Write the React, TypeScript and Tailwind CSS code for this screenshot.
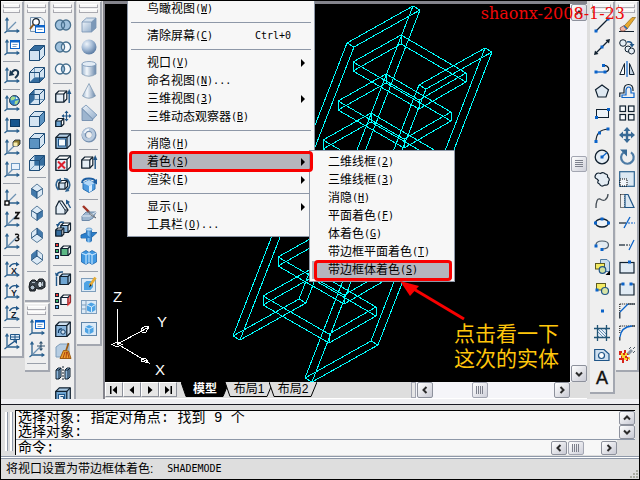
import React from "react";

type Item = { name: string; art: React.ReactNode } | "sep";

const INK = "#10202f";
const NAVY = "#1f5587";
const BLUE = "#0a63c9";

function Axes({ children }: { children?: React.ReactNode }) {
  return (
    <>
      <path d="M3 1.5V14H15M.5 16L3 14" fill="none" stroke="#2d628f" strokeWidth="1.3" />
      <path d="M3 0L5.2 3.6H.8ZM16 14L12.6 11.8V16.2Z" fill="#2d628f" />
      {children}
    </>
  );
}

const diagonal = <path d="M3.5 13.5L12 5" stroke="#6f93b3" strokeWidth="1.2" />;

function SmallWindow() {
  return (
    <>
      <rect x="6.5" y="1.5" width="9" height="8" fill="#fff" stroke={BLUE} />
      <path d="M6.5 2.5h9" stroke={BLUE} strokeWidth="2" />
      <path d="M8.5 5.5h5M8.5 7.5h4" stroke="#7ba0c5" />
    </>
  );
}

function Turn({ letter }: { letter: string }) {
  return (
    <Axes>
      <path d="M5.5 6Q8 1.5 13 3" fill="none" stroke={NAVY} strokeWidth="1.4" />
      <path d="M15.5 3.5L12 5.6V.8Z" fill={NAVY} />
      <text x="7" y="12.5" fontSize="9" fontWeight="700" fontFamily="Liberation Sans, sans-serif" fill={INK}>
        {letter}
      </text>
    </Axes>
  );
}

function ViewCube({ face }: { face: "top" | "bottom" | "left" | "right" | "front" | "back" }) {
  const faces = {
    top: "M.5 5.5L5.5.5H15.5L10.5 5.5Z",
    bottom: "M.5 15.5L5.5 10.5H15.5L10.5 15.5Z",
    left: "M.5 5.5L5.5.5V10.5L.5 15.5Z",
    right: "M10.5 5.5L15.5.5V10.5L10.5 15.5Z",
    front: "M.5 5.5H10.5V15.5H.5Z",
    back: "M5.5.5H15.5V10.5H5.5Z",
  };
  const hollow = face === "bottom" || face === "left" || face === "back";
  return (
    <>
      <path d="M.5 5.5L5.5.5H15.5V10.5L10.5 15.5H.5Z" fill="#d4e4f2" />
      <path d={faces[face]} fill={face === "right" || face === "front" ? "#5c93c2" : "#356d9f"} />
      {hollow && <path d="M5.5.5V10.5H15.5M5.5 10.5L.5 15.5" fill="none" stroke="#6d97bb" />}
      <path
        d="M.5 5.5L5.5.5H15.5V10.5L10.5 15.5H.5ZM.5 5.5H10.5V15.5M10.5 5.5L15.5.5"
        fill="none"
        stroke="#1f4d78"
      />
    </>
  );
}

function IsoCube({ shade }: { shade: "left" | "right" | "backRight" | "backLeft" }) {
  const faces = {
    left: "M2.5 5.5L8 9V15.5L2.5 11.5Z",
    right: "M8 9L13.5 5.5V11.5L8 15.5Z",
    backRight: "M8 1L13.5 5.5V10.5L8 7Z",
    backLeft: "M8 1L2.5 5.5V10.5L8 7Z",
  };
  return (
    <>
      <path d="M8 1L13.5 5.5V11.5L8 15.5L2.5 11.5V5.5Z" fill="#dceaf6" stroke="#5a7c9b" />
      <path d={faces[shade]} fill="#4279ab" />
      {shade === "left" || shade === "right" ? (
        <path d="M2.5 5.5L8 9L13.5 5.5M8 9V15.5" fill="none" stroke="#1f4d78" />
      ) : (
        <path d="M2.5 11L8 7L13.5 11M8 7V1" fill="none" stroke="#1f4d78" />
      )}
    </>
  );
}

function Rings({ a, b, mid }: { a: string; b: string; mid: string }) {
  return (
    <>
      <circle cx="5" cy="8" r="4.5" fill={a} />
      <circle cx="11" cy="8" r="4.5" fill={b} />
      <path d="M8 4.6A4.5 4.5 0 0 1 8 11.4A4.5 4.5 0 0 1 8 4.6Z" fill={mid} />
      <ellipse cx="5" cy="8" rx="4.6" ry="5" fill="none" stroke="#47708f" strokeWidth="1.3" />
      <ellipse cx="11" cy="8" rx="4.6" ry="5" fill="none" stroke="#47708f" strokeWidth="1.3" />
    </>
  );
}

function Block({
  x = 1,
  y = 2,
  s = 9,
  d = 3,
  fill = "#e4edf5",
  side = "#fff",
}: {
  x?: number;
  y?: number;
  s?: number;
  d?: number;
  fill?: string;
  side?: string;
}) {
  return (
    <g stroke={INK} strokeWidth="1.2" strokeLinejoin="round">
      <path d={`M${x} ${y + d}l${d} ${-d}h${s}v${s}l${-d} ${d}h${-s}z`} fill={side} />
      <path d={`M${x} ${y + d}h${s}v${s}h${-s}z`} fill={fill} />
      <path d={`M${x + s} ${y + d}l${d} ${-d}`} fill="none" />
    </g>
  );
}

function ColorDots() {
  return (
    <>
      <rect x=".5" y=".5" width="3" height="3" fill="#e33" stroke={INK} />
      <rect x=".5" y="6.5" width="3" height="3" fill="#3cb86a" stroke={INK} />
      <rect x=".5" y="12.5" width="3" height="3" fill="#5aa9e8" stroke={INK} />
    </>
  );
}

function Nodes({ at }: { at: [number, number][] }) {
  return (
    <>
      {at.map(([x, y]) => (
        <rect key={`${x}-${y}`} x={x - 1.5} y={y - 1.5} width="3" height="3" fill={BLUE} />
      ))}
    </>
  );
}

const extrude = (
  <>
    <Block x={0.8} y={2} s={8} d={3} />
    <path d="M14.2 14V4" stroke={NAVY} strokeWidth="1.4" />
    <path d="M14.2 0L16.4 5H12Z" fill={NAVY} />
  </>
);

const ucsBar: Item[] = [
  { name: "UCS", art: <Axes>{diagonal}</Axes> },
  { name: "显示 UCS 对话框", art: <Axes><SmallWindow /></Axes> },
  "sep",
  {
    name: "上一个 UCS",
    art: (
      <Axes>
        <path d="M7 6.5Q11 .5 14 4.5Q15 8 11 11" fill="none" stroke="#183650" strokeWidth="2" />
        <path d="M5 9L6 3L10.5 8Z" fill="#183650" />
      </Axes>
    ),
  },
  "sep",
  {
    name: "世界 UCS",
    art: (
      <Axes>
        <circle cx="10.5" cy="5.5" r="5" fill="#3286ce" stroke={INK} strokeWidth=".8" />
        <path d="M8 1.5Q11 1 12 3L9.5 5L7 5.5L6.5 3ZM11 6L15 5L13 9L10.5 9.5Z" fill="#a8dc8a" />
        <path d="M12 1.5L14 4L12 4Z" fill="#eff7ff" />
      </Axes>
    ),
  },
  { name: "对象 UCS", art: <Axes><rect x="6.5" y="2.5" width="9" height="7" fill="#17568f" stroke="#0d3861" /></Axes> },
  {
    name: "面 UCS",
    art: <Axes>{diagonal}<path d="M9 3L11 1H16V5L14 7H9Z" fill="#8d7b30" stroke={INK} strokeWidth=".8" /><rect x="9.5" y="3.5" width="4" height="3.5" fill="#f7edb0" /></Axes>,
  },
  {
    name: "视图 UCS",
    art: <Axes>{diagonal}<rect x="7.5" y="2.5" width="8" height="6" fill="#e8f2fc" stroke="#6c97c0" /></Axes>,
  },
  "sep",
  {
    name: "原点 UCS",
    art: <Axes>{diagonal}<rect x="1" y="12" width="4" height="4" fill="#fff" stroke="#000" strokeWidth="1.3" /></Axes>,
  },
  {
    name: "Z 轴矢量 UCS",
    art: <Axes>{diagonal}<path d="M11 1.7H15L11 7.3H15.4" fill="none" stroke="#111" strokeWidth="1.7" /></Axes>,
  },
  {
    name: "三点 UCS",
    art: <Axes>{diagonal}<path d="M11 1.5Q15 .5 14.5 3Q14 4.2 12.5 4.2Q15 4.5 14.8 6.2Q14 8.5 11 7.3" fill="none" stroke="#111" strokeWidth="1.5" /></Axes>,
  },
  "sep",
  { name: "绕 X 轴旋转", art: <Turn letter="X" /> },
  { name: "绕 Y 轴旋转", art: <Turn letter="Y" /> },
  { name: "绕 Z 轴旋转", art: <Turn letter="Z" /> },
  "sep",
  {
    name: "应用 UCS",
    art: (
      <Axes>
        <path d="M6.500 1.500h9v5h-9zM11 1.500v5M6.500 4h9" fill="#dbe9f6" stroke={NAVY} />
        <path d="M4 13L11 8" stroke={NAVY} strokeWidth="1.5" />
        <path d="M13 7V11L9 7.500Z" fill={NAVY} />
      </Axes>
    ),
  },
];

const viewBar: Item[] = [
  {
    name: "命名视图",
    art: (
      <>
        <path d="M1.5 .5H12L15.500 4V14.500H1.500Z" fill="#eef4fa" stroke="#7894ae" />
        <circle cx="7" cy="5" r="3.300" fill="#fff" stroke={INK} strokeWidth="1.200" />
        <path d="M4.500 7.500L1 12" stroke="#8b5b21" strokeWidth="2" />
        <rect x="6.500" y="8.500" width="9" height="7" fill="#fff" stroke={BLUE} />
        <path d="M6.500 9.500h9" stroke={BLUE} strokeWidth="2" />
        <path d="M8.500 12.500h5" stroke="#7ba0c5" />
      </>
    ),
  },
  "sep",
  { name: "俯视图", art: <ViewCube face="top" /> },
  { name: "仰视图", art: <ViewCube face="bottom" /> },
  { name: "左视图", art: <ViewCube face="left" /> },
  { name: "右视图", art: <ViewCube face="right" /> },
  { name: "主视图", art: <ViewCube face="front" /> },
  { name: "后视图", art: <ViewCube face="back" /> },
  "sep",
  { name: "西南等轴测", art: <IsoCube shade="left" /> },
  { name: "东南等轴测", art: <IsoCube shade="right" /> },
  { name: "东北等轴测", art: <IsoCube shade="backRight" /> },
  { name: "西北等轴测", art: <IsoCube shade="backLeft" /> },
  "sep",
  {
    name: "相机",
    art: (
      <>
        <path d="M1 5L3 3H6L8 5L10 2H14L16 5V10L13 12H9L7 11L6 14H1L0 10Z" fill="#3c454e" stroke="#15191d" />
        <circle cx="3.500" cy="10.500" r="2.500" fill="#aebcc9" stroke="#15191d" />
        <ellipse cx="11" cy="7.500" rx="2.300" ry="3.300" fill="#dce6ef" stroke="#15191d" />
        <path d="M3 5.500H6M13.500 5V9" stroke="#b6c2cc" />
      </>
    ),
  },
];

const ucsBar2: Item[] = [
  { name: "命名 UCS", art: <Axes><SmallWindow /></Axes> },
  {
    name: "移动 UCS",
    art: <Axes>{diagonal}<path d="M12 1V9M8 5H16M10.500 2.500L12 .8L13.500 2.500M10.500 7.500L12 9.200L13.500 7.500" fill="none" stroke="#31536f" strokeWidth="1.100" /></Axes>,
  },
  "sep",
];

const solidEditBar: Item[] = [
  { name: "并集", art: <Rings a="#9fc1dd" b="#9fc1dd" mid="#9fc1dd" /> },
  { name: "差集", art: <Rings a="#9fc1dd" b="#f7fafd" mid="#eef4fa" /> },
  { name: "交集", art: <Rings a="#f7fafd" b="#f7fafd" mid="#9fc1dd" /> },
  "sep",
  { name: "拉伸面", art: extrude },
  {
    name: "移动面",
    art: (
      <>
        <Block x={0.8} y={7.500} s={5.500} d={2.500} fill="#6ea5d2" />
        <path d="M11.500 1V9M7.500 5H15.500" stroke={NAVY} strokeWidth="1.200" />
        <path d="M11.500 -.5L13.500 2H9.500ZM11.500 10.500L13.500 8H9.500ZM6.500 5L9 3V7ZM16.500 5L14 3V7Z" fill={NAVY} />
      </>
    ),
  },
  {
    name: "偏移面",
    art: (
      <>
        <Block x={1} y={0.800} s={11} d={3.500} fill="#8bb6dc" side="#b6d0e7" />
        <rect x="3.500" y="6" width="7" height="7" fill="#f5f9fc" stroke={NAVY} />
      </>
    ),
  },
  { name: "删除面", art: <><Block x={1} y={0.800} s={11} d={3.500} /><path d="M3 6.500L10 13.500M10 6.500L3 13.500" stroke="#dd1f2d" strokeWidth="2" /></> },
  {
    name: "旋转面",
    art: (
      <>
        <Block x={4} y={3.500} s={6} d={2.500} fill="#cfe0ef" />
        <path d="M3.500 13Q-1 8 3 3M12.500 13Q17 8 12.500 2.500L9 1.500" fill="none" stroke="#2d628f" strokeWidth="1.600" />
        <path d="M1.500 3L6 1V5.500ZM10 15L14.500 14L12 10.500Z" fill="#2d628f" />
      </>
    ),
  },
  {
    name: "倾斜面",
    art: (
      <>
        <path d="M1 15V8L4 2L7 2L13 11L10 15Z" fill="#e4edf5" stroke={INK} strokeWidth="1.200" />
        <path d="M4 2L10 11V15M10 11L13 11" fill="none" stroke={INK} />
        <path d="M15.500 9L12.500 3.500" stroke={NAVY} strokeWidth="1.400" />
        <path d="M11 .5L15 3L11 5.500Z" fill={NAVY} />
      </>
    ),
  },
  {
    name: "复制面",
    art: (
      <>
        <Block x={6} y={2} s={7} d={2.500} fill="#8bb6dc" />
        <Block x={0.800} y={7} s={6} d={2} fill="#356d9f" />
        <path d="M3 4Q5 0 9 1.500" fill="none" stroke={NAVY} strokeWidth="1.500" />
        <path d="M1 3L5 3L2.500 6.500Z" fill={NAVY} />
      </>
    ),
  },
  { name: "着色面", art: <><ColorDots /><Block x={6} y={3} s={7} d={2.500} fill="#5bb784" /></> },
  "sep",
  {
    name: "复制边",
    art: (
      <>
        <Block x={5} y={3} s={8} d={2.500} fill="#6ea5d2" side="#a9c9e4" />
        <path d="M1.500 15V6M1.500 4Q3 .5 8 1" fill="none" stroke={NAVY} strokeWidth="1.400" />
        <path d="M0 1.500L4 4L1 6Z" fill={NAVY} />
      </>
    ),
  },
  { name: "着色边", art: <><ColorDots /><Block x={6} y={2} s={7} d={2.500} fill="#f3f6fa" /><path d="M13 5V12L15 10V2.500" fill="none" stroke="#e33" strokeWidth="1.200" /></> },
  "sep",
  {
    name: "压印",
    art: (
      <>
        <Block x={0.800} y={1} s={11} d={3.500} fill="#8bb6dc" side="#cfe0ef" />
        <path d="M3.500 12Q3 7.500 7 8" fill="none" stroke="#0d3861" strokeWidth="1.200" />
        <circle cx="8" cy="11" r="2.200" fill="#cfe0ef" stroke="#0d3861" />
      </>
    ),
  },
  {
    name: "清除",
    art: (
      <>
        <path d="M1 4L5 1H14V11L10 14H1Z" fill="#b6cde2" stroke="#7f9db9" />
        <path d="M13.500 0L11 8" stroke="#9a5a12" strokeWidth="1.800" />
        <path d="M8.500 7.500L13.500 8L16 15.500H5Z" fill="#eda32d" stroke="#9a5a12" />
        <path d="M8 15L10 9M11 15L11.500 9M14 15L12.500 9" stroke="#a5340f" strokeWidth=".9" />
      </>
    ),
  },
  {
    name: "分割",
    art: (
      <>
        <path d="M1 5L3 3H6V12L4 14H1ZM10 5L12 3H15V12L13 14H10Z" fill="#8bb6dc" stroke={INK} />
        <path d="M4 14V5H1M4 5L6 3M13 14V5H10M13 5L15 3" fill="none" stroke={INK} />
        <path d="M8 1V16" stroke={INK} strokeDasharray="2 1" />
      </>
    ),
  },
  { name: "抽壳", art: <><Block x={0.800} y={0.800} s={11} d={3.500} fill="#6ea5d2" side="#a9c9e4" /><rect x="3.500" y="7.500" width="6" height="6" fill="#e4edf5" stroke={NAVY} /><path d="M5.500 9.500h3v4" fill="none" stroke={NAVY} /></> },
];

const solidsBar: Item[] = [
  {
    name: "长方体",
    art: (
      <>
        <path d="M1 5L5.500 1H15V11L10.500 15H1Z" fill="#d3e0ed" />
        <path d="M1 5H10.500V15H1Z" fill="url(#steel)" />
        <path d="M10.500 5L15 1V11L10.500 15Z" fill="#7c98b8" />
        <path d="M1 5L5.500 1H15V11L10.500 15H1ZM1 5H10.500V15M10.500 5L15 1" fill="none" stroke="#7793b2" strokeWidth=".8" />
      </>
    ),
  },
  { name: "球体", art: <circle cx="8" cy="8" r="7.500" fill="url(#ball)" /> },
  {
    name: "圆柱体",
    art: (
      <>
        <path d="M1 3V13Q8 17.500 15 13V3Z" fill="url(#tube)" stroke="#8099b3" strokeWidth=".8" />
        <ellipse cx="8" cy="3" rx="7" ry="2.500" fill="#e3ecf5" stroke="#7c98b8" strokeWidth=".8" />
      </>
    ),
  },
  { name: "圆锥体", art: <path d="M8 .5L14.500 13Q8 17.500 1.500 13Z" fill="url(#tube)" stroke="#8099b3" strokeWidth=".8" /> },
  {
    name: "楔体",
    art: (
      <>
        <path d="M1 3L5 0L16 10L11.500 15.500H1Z" fill="#8ca7c5" />
        <path d="M5 0L16 10L11.500 14L1 3.500Z" fill="url(#steel)" stroke="#7c98b8" strokeWidth=".8" />
        <path d="M1 3.500L11.500 14V15.500H1Z" fill="#9db5cf" stroke="#6d89a8" strokeWidth=".8" />
      </>
    ),
  },
  {
    name: "圆环",
    art: (
      <>
        <circle cx="8" cy="8" r="5.200" fill="none" stroke="#7590b0" strokeWidth="4.600" />
        <circle cx="7.500" cy="7.500" r="5.200" fill="none" stroke="#b8cade" strokeWidth="3" />
        <path d="M3.500 6Q5 2.800 8 2.600" fill="none" stroke="#f1f6fb" strokeWidth="1.600" />
      </>
    ),
  },
  "sep",
  { name: "拉伸", art: extrude },
  {
    name: "旋转",
    art: (
      <>
        <path d="M2 6L8 3L14 6V12L8 15.500L2 12Z" fill="#4d9be0" stroke="#2b73b5" />
        <path d="M2 6L8 9L14 6L8 3Z" fill="#b5d9f8" />
        <path d="M8 9L11 7.500V13.500L8 15.500Z" fill="#d9ecfc" />
        <path d="M1 6Q1 1.500 8 1.500Q13 1.500 14.500 4" fill="none" stroke="#1c5ea2" strokeWidth="1.800" />
        <path d="M16 2V7.500L11.500 5Z" fill="#1c5ea2" />
      </>
    ),
  },
  "sep",
  {
    name: "剖切",
    art: (
      <>
        <path d="M1 11L5 7H15L12 13L8 15.500H1Z" fill="#9db6cf" stroke="#6d89a8" />
        <path d="M1 11H9L15 7" fill="none" stroke="#e3ecf5" />
        <path d="M2 1L8 7" stroke="#a13324" strokeWidth="2.400" />
        <path d="M7 6L15 13L9.500 10Z" fill="#f4f6f8" stroke="#59636d" strokeWidth=".8" />
      </>
    ),
  },
  {
    name: "切割",
    art: (
      <>
        <path d="M0 8L6 5.500H16L10 11H0Z" fill="#2c7fcb" stroke="#165a9b" strokeWidth=".8" />
        <path d="M5 2V14Q8 17 11 14V2Z" fill="url(#water)" />
        <path d="M0 9L5 7L10 11H1ZM11 7L15 6.500L11 9Z" fill="#2c7fcb" />
        <ellipse cx="8" cy="2.500" rx="3" ry="1.500" fill="#b9dbf7" stroke="#3a81bd" strokeWidth=".6" />
      </>
    ),
  },
  {
    name: "干涉",
    art: (
      <>
        <path d="M.5 4L5 1.500L8 3.500L11 1.500L15.500 4V13L11 15.500L8 13.500L5 15.500L.5 13Z" fill="#3f98e2" stroke="#1d66ad" strokeWidth=".8" />
        <path d="M.5 4L5 6V15.500M5 6L8 4L11 6L15.500 4M11 6V15.500M8 4V13.500" fill="none" stroke="#bcdffb" strokeWidth="1.200" />
      </>
    ),
  },
  "sep",
  {
    name: "设置图形",
    art: (
      <>
        <rect x=".5" y="1.500" width="14" height="13" fill="#dceaf6" stroke="#7d9dbb" />
        <path d="M3 6L5.500 4H12V10L9.500 13H3Z" fill="#4da3e4" />
        <path d="M14.500 .5L9 8.500" stroke="#e6ac37" strokeWidth="2.800" />
        <path d="M9.500 7L8 10.500L10.500 8.500Z" fill="#1d1d1d" />
      </>
    ),
  },
  {
    name: "设置视图",
    art: (
      <>
        <rect x=".5" y="1.500" width="15" height="13" fill="#dceaf6" stroke="#7d9dbb" />
        <path d="M1 6H5M1 10H5M5 2V14" stroke="#7d9dbb" />
        <path d="M6 6L10 3.500L14.500 5.500V11L10.500 13.500L6 11.500Z" fill="#4da3e4" />
        <path d="M6 6L10.500 8L14.500 5.500M10.500 8V13.500" fill="none" stroke="#d3eafc" />
      </>
    ),
  },
  {
    name: "设置轮廓",
    art: (
      <>
        <rect x=".5" y="1.500" width="15" height="13" fill="#dceaf6" stroke="#6085a8" />
        <path d="M4 6L8 4L12.500 6V11L8 13.500L4 11Z" fill="#4da3e4" />
        <path d="M4 6L8 8L12.500 6M8 8V13.500" fill="none" stroke="#d3eafc" />
      </>
    ),
  },
];

const drawBar: Item[] = [
  { name: "直线", art: <><path d="M2 14L14 2" stroke={INK} strokeWidth="1.300" /><Nodes at={[[2, 14], [14, 2]]} /></> },
  { name: "构造线", art: <><path d="M2 14L14 2" stroke={INK} strokeWidth="1.300" /><path d="M0 16L1 11.500L4.500 15ZM16 0L15 4.500L11.500 1Z" fill={INK} /><Nodes at={[[8, 8]]} /></> },
  { name: "多段线", art: <><path d="M2 11H11" stroke={BLUE} strokeWidth="1.300" /><path d="M11 11Q15.500 10 14.500 7Q13 4 9 4.500" fill="none" stroke={INK} strokeWidth="1.200" /><Nodes at={[[2, 11], [11, 11], [9.500, 4.500]]} /></> },
  { name: "正多边形", art: <path d="M8 2L14.500 6.700L12 14H4L1.500 6.700Z" fill="#dfe9f2" stroke={INK} strokeWidth="1.200" /> },
  { name: "矩形", art: <><rect x="2.500" y="4.500" width="12" height="8" fill="#eef3f8" stroke={INK} /><Nodes at={[[2.500, 12.500], [14.500, 4.500]]} /></> },
  { name: "圆弧", art: <><path d="M2 14.500Q2 3 14 2" fill="none" stroke={INK} strokeWidth="1.200" /><Nodes at={[[2, 14.500], [5.500, 6], [14, 2]]} /></> },
  { name: "圆", art: <><circle cx="8" cy="8" r="6.800" fill="#e5edf4" stroke={INK} strokeWidth="1.300" /><path d="M8 8L13 3.500" stroke={BLUE} strokeWidth="1.200" /><Nodes at={[[8, 8]]} /></> },
  { name: "修订云线", art: <path d="M3 8Q0 7 1.500 4Q3 1 6.500 2.500Q9 .5 11.500 3Q14 3 13.500 6Q16.500 8 14.500 10.500Q15 14.500 11 14Q7 16.500 5.500 13Q2.500 12 4.500 9.500Z" fill="#e5edf4" stroke={INK} strokeWidth="1.200" /> },
  { name: "样条曲线", art: <path d="M2 15Q2 5 6 6Q9 8 11 7Q14 5 14 1" fill="none" stroke="#444d55" strokeWidth="1.300" /> },
  { name: "椭圆", art: <><ellipse cx="8" cy="8" rx="6.500" ry="4" fill="#eef3f8" stroke={INK} strokeWidth="1.300" /><Nodes at={[[1.500, 8], [14.500, 8], [8, 4]]} /></> },
  { name: "椭圆弧", art: <><path d="M2 8Q2 4 8 4Q14.500 4 14.500 8Q14.500 12 8 12L8 8Z" fill="#e1eaf2" /><path d="M2 8Q2 4 8 4Q14.500 4 14.500 8Q14.500 12 8 12" fill="none" stroke="#4b5b69" strokeWidth="1.200" /><Nodes at={[[2, 9], [8, 12.500]]} /></> },
  {
    name: "插入块",
    art: (
      <>
        <path d="M6.500 .5H13L15.500 3V12.500H6.500Z" fill="#c7dcee" stroke="#4e7ba4" />
        <rect x="1.500" y="4.500" width="9" height="5.500" fill="#f4ea62" stroke="#5d5a1f" />
        <circle cx="8.500" cy="11" r="3.300" fill="#cfe0a2" stroke={NAVY} strokeWidth="1.200" />
        <path d="M16 11.500V16H11.500Z" fill="#000" />
      </>
    ),
  },
  {
    name: "创建块",
    art: (
      <>
        <rect x="2.500" y="2.500" width="9" height="6.500" fill="#f4ea62" stroke="#5d5a1f" />
        <circle cx="11" cy="10" r="3.500" fill="#d8e4a5" stroke={NAVY} strokeWidth="1.200" />
        <Nodes at={[[3, 9]]} />
      </>
    ),
  },
  { name: "点", art: <Nodes at={[[8.500, 8]]} /> },
  {
    name: "图案填充",
    art: (
      <>
        <rect x="3" y="3" width="10" height="10" fill="#e5eff8" />
        <path d="M3 6L10 13M3 10L6 13M6 3L13 10M10 3L13 6M3 3L13 13" stroke="#5d87ac" strokeWidth=".9" />
        <path d="M3.500 0V16M12.500 0V16M0 3.500H16M0 12.500H16" stroke="#215475" strokeWidth="1.300" />
      </>
    ),
  },
  { name: "面域", art: <><path d="M.7 2.500H10L15 7V13.500H.7Z" fill="#cfe0f0" stroke={NAVY} strokeWidth="1.200" /><circle cx="7.500" cy="8.500" r="3" fill="#fff" stroke={NAVY} strokeWidth="1.200" /></> },
  {
    name: "多行文字",
    art: (
      <text x="8" y="14.500" fontSize="18" textAnchor="middle" fontFamily="Liberation Sans, sans-serif" fill="#111" stroke="#111" strokeWidth=".4">
        A
      </text>
    ),
  },
];

const modifyBar: Item[] = [
  {
    name: "删除",
    art: (
      <>
        <path d="M0 14.500H15" stroke={INK} />
        <path d="M5 9L13 .5H16.500L8 12Z" fill="#e8a92e" stroke="#8d6a21" strokeWidth=".7" />
        <path d="M1 11L5 8.500L8.500 11.500L5 14H2Z" fill="#f4b6a6" stroke="#8a5044" strokeWidth=".8" />
        <path d="M5 9L8 12" stroke="#2e6fae" strokeWidth="1.600" />
      </>
    ),
  },
  {
    name: "复制",
    art: (
      <>
        <circle cx="4" cy="4" r="3.300" fill="#e5edf4" stroke={INK} />
        <circle cx="9" cy="10" r="3" fill="#e5edf4" stroke={INK} />
        <circle cx="12.500" cy="12" r="3" fill="#e5edf4" stroke={INK} />
        <path d="M8 3Q12 2 13 5" fill="none" stroke={NAVY} strokeWidth="1.500" />
        <path d="M10.500 5H15.500L13 8.500Z" fill={NAVY} />
      </>
    ),
  },
  {
    name: "镜像",
    art: (
      <>
        <path d="M5.500 2.500V13.500H.8Z" fill="#fff" stroke={INK} />
        <path d="M10.500 2.500V13.500H15.200Z" fill="#c6d5e3" stroke={INK} />
        <path d="M8 0V16" stroke={BLUE} strokeWidth="1.200" />
      </>
    ),
  },
  {
    name: "偏移",
    art: (
      <>
        <path d="M.8 14V10H5V7Q5 1.500 9.500 1.500Q14 1.500 14 7V8" fill="none" stroke={INK} strokeWidth="1.200" />
        <path d="M3 14.500V12H7V7Q7.500 4 9.500 4Q12 4 12 7V10H15V14.500Z" fill="none" stroke={BLUE} strokeWidth="1.200" />
      </>
    ),
  },
  {
    name: "阵列",
    art: (
      <g fill="#f7fafd" stroke={INK} strokeWidth="1.200">
        <rect x="1" y="1" width="5.500" height="5.500" />
        <rect x="9.500" y="1" width="5.500" height="5.500" />
        <rect x="1" y="9.500" width="5.500" height="5.500" />
        <rect x="9.500" y="9.500" width="5.500" height="5.500" />
      </g>
    ),
  },
  {
    name: "移动",
    art: (
      <>
        <path d="M8 2V14M2 8H14" stroke="#386a96" strokeWidth="2.400" />
        <path d="M8 0L11.500 4H4.500ZM8 16L11.500 12H4.500ZM0 8L4 4.500V11.500ZM16 8L12 4.500V11.500Z" fill="#386a96" />
      </>
    ),
  },
  {
    name: "旋转",
    art: (
      <>
        <path d="M4.500 3.500A6.300 6.300 0 1 0 12 3.300" fill="none" stroke="#4d7ba5" strokeWidth="2.200" />
        <path d="M1 .5H8V7.500Z" fill="#386a96" />
      </>
    ),
  },
  {
    name: "缩放",
    art: (
      <>
        <rect x=".7" y=".7" width="14.600" height="14.600" fill="#dce8f2" stroke="#2d628f" strokeWidth="1.200" />
        <rect x="1" y="8" width="7" height="7" fill="#f2f6fa" stroke="#000" strokeDasharray="1 1" />
      </>
    ),
  },
  {
    name: "拉伸",
    art: (
      <>
        <path d="M1.500 1.500H6V14.500H1.500Z" fill="none" stroke="#000" strokeDasharray="1 1" />
        <path d="M6 1.500L9 1.500L15 14.500H6Z" fill="#dce8f2" stroke={NAVY} strokeWidth="1.200" />
      </>
    ),
  },
  { name: "修剪", art: <><path d="M0 8H7" stroke={INK} strokeWidth="1.200" /><path d="M9 8H16" stroke={BLUE} strokeWidth="1.200" strokeDasharray="2 1" /><path d="M5 13L11 2" stroke={BLUE} strokeWidth="1.300" /></> },
  { name: "延伸", art: <><path d="M0 8H6" stroke={INK} strokeWidth="1.200" /><path d="M7 8H11" stroke={INK} strokeDasharray="2 1" /><path d="M10 13L15 3" stroke={BLUE} strokeWidth="1.300" /></> },
  { name: "打断于点", art: <><rect x="1" y="3.500" width="14" height="10.500" fill="#e1ebf4" stroke={INK} strokeWidth="1.200" /><Nodes at={[[10.500, 3]]} /></> },
  { name: "打断", art: <><path d="M4 3H1V14H15V3H12" fill="#e1ebf4" stroke={INK} strokeWidth="1.200" /><Nodes at={[[4, 3], [12, 3]]} /></> },
  { name: "倒角", art: <><path d="M.8 1H16M.8 1V9" fill="none" stroke="#000" strokeDasharray="1 1" /><path d="M.8 15.500V9M9 1H16" stroke={INK} strokeWidth="1.200" /><path d="M1 9L9 1" stroke={BLUE} strokeWidth="1.300" /></> },
  { name: "圆角", art: <><path d="M.8 1H16M.8 1V9" fill="none" stroke="#000" strokeDasharray="1 1" /><path d="M.8 15.500V12M13 1H16" stroke={INK} strokeWidth="1.200" /><path d="M1 12Q2 2 13 1" fill="none" stroke={BLUE} strokeWidth="1.300" /></> },
  {
    name: "分解",
    art: (
      <>
        <path d="M0 4H3V6H5V3H7V6H10V8H8V10H11V12H9V14H7V12H5V16H3V13H0V11H2V8H0Z" fill="#d8261c" />
        <path d="M2 6H4V8H6V6H8V9H6V11H8V13H5V11H3V9H2ZM9 10H11V13H10Z" fill="#f9d433" />
        <path d="M9 7L13 3" stroke="#8996a3" strokeWidth="3" />
        <path d="M10 2L12 0M14 6L16 4M14 2L16 0" stroke="#4d5966" />
      </>
    ),
  },
];

function Toolbar({ label, items, className }: { label: string; items: Item[]; className: string }) {
  return (
    <div
      role="toolbar"
      aria-label={label}
      className={`flex shrink-0 flex-col items-center border-t border-r-2 border-b-2 border-t-white border-r-[#a3a7b0] border-b-[#a3a7b0] bg-[#efefef] pb-1 ${className}`}
    >
      <div className="flex h-3 w-full shrink-0 flex-col gap-px px-0.5 pt-0.5">
        <span className="h-1 border border-[#a9a9b0] border-t-white bg-[#f7f7f7]" />
        <span className="h-1 border border-[#a9a9b0] border-t-white bg-[#f7f7f7]" />
      </div>
      {items.map((item, i) =>
        item === "sep" ? (
          <div key={i} role="separator" className="flex h-1.5 w-full shrink-0 items-center px-0.5">
            <span className="h-px w-full bg-[#9aa0aa]" />
          </div>
        ) : (
          <button key={i} type="button" aria-label={item.name} className="flex h-[22px] w-[22px] shrink-0 items-center justify-center">
            <svg viewBox="0 0 16 16" className="h-4 w-4 overflow-visible" aria-hidden="true">
              {item.art}
            </svg>
          </button>
        ),
      )}
    </div>
  );
}

type Dir = "up" | "down" | "left" | "right";
const chevrons: Record<Dir, string> = {
  up: "M2 6.500L5 3.500L8 6.500",
  down: "M2 3.500L5 6.500L8 3.500",
  left: "M6.500 2L3.500 5L6.500 8",
  right: "M3.500 2L6.500 5L3.500 8",
};

function ScrollButton({ dir, label, className }: { dir: Dir; label: string; className: string }) {
  return (
    <button
      type="button"
      aria-label={label}
      className={`flex shrink-0 items-center justify-center rounded-xs border border-[#8d919c] bg-linear-to-br from-white to-[#c9cad4] ${className}`}
    >
      <svg viewBox="0 0 10 10" className="h-2.5 w-2.5" aria-hidden="true">
        <path d={chevrons[dir]} fill="none" stroke="#2b2b2b" strokeWidth="2" />
      </svg>
    </button>
  );
}

function Thumb({ vertical, className }: { vertical?: boolean; className: string }) {
  return (
    <div className={`flex shrink-0 items-center justify-center rounded-xs border border-[#a3a6b2] bg-linear-to-br from-white to-[#cfd0da] ${className}`}>
      <svg viewBox="0 0 8 8" className="h-2 w-2" aria-hidden="true">
        <path
          d={vertical ? "M0 .5H8M0 2.500H8M0 4.500H8M0 6.500H8" : "M.5 0V8M2.500 0V8M4.500 0V8M6.500 0V8"}
          stroke="#7d808c"
        />
      </svg>
    </div>
  );
}

type Entry = { text: string; hot: string; dots?: boolean; keys?: string; more?: boolean; active?: boolean } | "sep";

const viewMenu: Entry[] = [
  { text: "鸟瞰视图", hot: "W" },
  "sep",
  { text: "清除屏幕", hot: "C", keys: "Ctrl+0" },
  "sep",
  { text: "视口", hot: "V", more: true },
  { text: "命名视图", hot: "N", dots: true },
  { text: "三维视图", hot: "3", more: true },
  { text: "三维动态观察器", hot: "B" },
  "sep",
  { text: "消隐", hot: "H" },
  { text: "着色", hot: "S", more: true, active: true },
  { text: "渲染", hot: "E", more: true },
  "sep",
  { text: "显示", hot: "L", more: true },
  { text: "工具栏", hot: "O", dots: true },
];

const shadeMenu: Entry[] = [
  { text: "二维线框", hot: "2" },
  { text: "三维线框", hot: "3" },
  { text: "消隐", hot: "H" },
  { text: "平面着色", hot: "F" },
  { text: "体着色", hot: "G" },
  { text: "带边框平面着色", hot: "T" },
  { text: "带边框体着色", hot: "S", active: true },
];

function Menu({ label, entries, className }: { label: string; entries: Entry[]; className: string }) {
  return (
    <div role="menu" aria-label={label} className={`absolute flex flex-col border border-[#8e98a8] bg-[#f7f7f7] ${className}`}>
      {entries.map((e, i) =>
        e === "sep" ? (
          <div key={i} role="separator" className="flex h-[9px] items-center">
            <span className="h-px w-full bg-[#8e98a8]" />
          </div>
        ) : (
          <button
            key={i}
            type="button"
            role="menuitem"
            className={`flex h-[18px] items-center pl-4 text-xs leading-[18px] ${e.active ? "bg-[#b5b5bd]" : ""}`}
          >
            <span>{e.text}</span>
            <span className="font-['DejaVu_Sans_Mono',monospace] text-[10px]">
              (<u>{e.hot}</u>){e.dots && "..."}
            </span>
            {e.keys && <span className="mr-5 ml-auto font-['DejaVu_Sans_Mono',monospace] text-[10px]">{e.keys}</span>}
            {e.more && (
              <svg viewBox="0 0 4 8" className="mr-1.5 ml-auto h-2 w-1" aria-hidden="true">
                <path d="M0 0L4 4L0 8Z" />
              </svg>
            )}
          </button>
        ),
      )}
    </div>
  );
}

const railPath =
  "M347 43L413 6L420 10L354 47ZM233 336L299 299L306 303L240 340ZM347 43L233 336M354 47L240 340M413 6L299 299M420 10L306 303";
const rungPath =
  "M353 62L401 35L466 73L419 100ZM353 71L401 44L466 82L419 109ZM353 62V71M401 35V44M466 73V82M419 100V109";

function Drawing() {
  return (
    <svg className="block h-[378px] w-[465px]" viewBox="105 4 465 378" aria-label="三维线框模型" role="img">
      <g fill="none" stroke="#00ffff" shapeRendering="crispEdges">
        <path d={railPath} />
        <path d={railPath} transform="translate(72 42)" />
        {[0, 1, 2, 3, 4, 5, 6].map((n) => (
          <path key={n} d={rungPath} transform={`translate(${-15 * n} ${39 * n})`} />
        ))}
      </g>
      <g fill="none" stroke="#fff" shapeRendering="crispEdges">
        <path d="M117.500 309V344L149 327M117.500 344L149 363" />
        <path d="M112 344.500L117 342L122 344.500L117 347ZM141 329L146 326L149 327L146 332L142 332ZM141 358L146 359L149 363L145 362L141 361Z" />
      </g>
      <g fill="#fff" fontSize="15" fontFamily="Liberation Sans, sans-serif">
        <text x="113" y="302">Z</text>
        <text x="157" y="327">Y</text>
        <text x="155" y="375">X</text>
      </g>
    </svg>
  );
}

function NavButton({ label, d }: { label: string; d: string }) {
  return (
    <button
      type="button"
      aria-label={label}
      className="flex h-[15px] w-[18px] items-center justify-center border border-t-white border-r-[#8b8f99] border-b-[#8b8f99] border-l-white bg-[#e6e6e6]"
    >
      <svg viewBox="0 0 8 8" className="h-2 w-2" aria-hidden="true">
        <path d={d} />
      </svg>
    </button>
  );
}

function SheetTab({ name, active }: { name: string; active?: boolean }) {
  return (
    <button
      type="button"
      role="tab"
      aria-selected={!!active}
      className={`relative -mr-1 flex h-[15px] w-12 items-center justify-center text-xs leading-[15px] ${active ? "font-bold text-white" : ""}`}
    >
      <svg viewBox="0 0 48 15" className="absolute inset-0 h-full w-full" aria-hidden="true">
        <path d="M0 0L5 14.500H42L48 0" fill={active ? "#000" : "#dedede"} stroke="#000" />
      </svg>
      <span className="relative">{name}</span>
    </button>
  );
}

export default function App() {
  return (
    <div className="relative flex h-screen w-full flex-col overflow-hidden border border-black bg-[#dedede] font-['Liberation_Sans','Noto_Sans_CJK_SC',sans-serif] text-black">
      <svg className="absolute h-0 w-0" aria-hidden="true">
        <defs>
          <radialGradient id="ball" cx=".35" cy=".3" r=".7">
            <stop offset="0" stopColor="#eef4fa" />
            <stop offset=".5" stopColor="#a9bfd9" />
            <stop offset="1" stopColor="#5f7fa6" />
          </radialGradient>
          <linearGradient id="steel" x1="0" y1="0" x2="1" y2="1">
            <stop offset="0" stopColor="#edf3f9" />
            <stop offset="1" stopColor="#94aecb" />
          </linearGradient>
          <linearGradient id="tube">
            <stop offset="0" stopColor="#9fb7d1" />
            <stop offset=".35" stopColor="#f3f7fb" />
            <stop offset="1" stopColor="#6786aa" />
          </linearGradient>
          <linearGradient id="water">
            <stop offset="0" stopColor="#1d66ad" />
            <stop offset=".4" stopColor="#7fc0f5" />
            <stop offset="1" stopColor="#1d66ad" />
          </linearGradient>
        </defs>
      </svg>

      <main className="flex min-h-0 flex-1 items-start gap-px overflow-hidden">
        <Toolbar label="UCS" items={ucsBar} className="w-[23px]" />
        <div className="flex flex-col gap-px">
          <Toolbar label="视图" items={viewBar} className="w-[25px]" />
          <Toolbar label="UCS II" items={ucsBar2} className="w-[25px]" />
        </div>
        <Toolbar label="实体编辑" items={solidEditBar} className="w-[25px]" />
        <Toolbar label="实体" items={solidsBar} className="w-[25px]" />

        <section className="flex min-w-0 flex-1 flex-col self-stretch border-t-[3px] border-l-2 border-t-[#84848c] border-l-[#84848c]">
          <div className="flex min-h-0 flex-1">
            <div className="min-w-0 flex-1 overflow-hidden bg-black">
              <Drawing />
            </div>
            <div className="flex w-[17px] shrink-0 flex-col items-center bg-[#f5f5f9]">
              <ScrollButton dir="up" label="向上滚动" className="h-[17px] w-4" />
              <div className="flex flex-1 flex-col justify-center pb-[58px]">
                <Thumb vertical className="h-4 w-4" />
              </div>
              <ScrollButton dir="down" label="向下滚动" className="h-[17px] w-4" />
            </div>
          </div>
          <div className="flex h-[17px] shrink-0 items-start border-b border-white">
            <NavButton label="第一个" d="M0 0H1.500V8H0ZM7 0V8L2.500 4Z" />
            <NavButton label="上一个" d="M6 0V8L1.500 4Z" />
            <NavButton label="下一个" d="M2 0V8L6.500 4Z" />
            <NavButton label="最后一个" d="M1 0V8L5.500 4ZM6.500 0H8V8H6.500Z" />
            <div role="tablist" aria-label="布局" className="ml-1 flex">
              <SheetTab name="模型" active />
              <SheetTab name="布局1" />
              <SheetTab name="布局2" />
            </div>
            <div className="mr-[17px] ml-auto flex h-4 w-[159px] gap-px bg-[#f5f5f9]">
              <span className="w-[5px] border border-[#a3a6b2] bg-[#e6e6e6]" />
              <ScrollButton dir="left" label="向左滚动" className="h-4 w-4" />
              <div className="flex flex-1 justify-center pr-7">
                <Thumb className="h-4 w-4" />
              </div>
              <ScrollButton dir="right" label="向右滚动" className="h-4 w-4" />
            </div>
          </div>
        </section>

        <Toolbar label="绘图" items={drawBar} className="ml-0.5 w-[25px]" />
        <Toolbar label="修改" items={modifyBar} className="w-[23px]" />
      </main>

      <div className="h-1.5 shrink-0 border-b border-b-[#1c1c24] bg-[#f0f0f3]" />

      <section aria-label="命令行" className="flex shrink-0 px-1 pt-[5px] pb-px">
        <div className="mr-0.5 flex w-2 gap-0.5 pt-0.5 pb-1">
          <span className="flex-1 border-r border-[#8e98a8] bg-white" />
          <span className="flex-1 border-r border-[#8e98a8] bg-white" />
        </div>
        <div className="min-w-0 flex-1 border-t border-l border-black">
          <div className="flex border-b border-[#8e98a8] bg-[#f7f7f7]">
            <div className="flex-1 pl-0.5 font-['Liberation_Mono','Noto_Sans_CJK_SC',monospace] text-sm leading-[14px] whitespace-pre">
              <p>选择对象: 指定对角点: 找到 9 个</p>
              <p>选择对象:</p>
            </div>
            <div className="flex w-4 flex-col">
              <ScrollButton dir="up" label="上一行" className="h-3.5 w-4" />
              <ScrollButton dir="down" label="下一行" className="h-3.5 w-4" />
            </div>
          </div>
          <div className="flex h-[15px] items-center">
            <div className="flex h-full flex-1 items-center bg-[#f7f7f7] pl-0.5 font-['Liberation_Mono','Noto_Sans_CJK_SC',monospace] text-sm leading-[14px]">
              <label htmlFor="command">命令:</label>
              <input id="command" type="text" className="h-3.5 min-w-0 flex-1 bg-transparent pl-1 outline-none" />
            </div>
            <div className="mr-[18px] flex h-full w-[66px] items-center gap-px bg-[#f7f7f7]">
              <ScrollButton dir="left" label="命令行左移" className="h-3.5 w-4" />
              <Thumb className="h-3.5 w-4" />
              <ScrollButton dir="right" label="命令行右移" className="ml-auto h-3.5 w-4" />
            </div>
          </div>
        </div>
      </section>

      <div className="h-[3px] shrink-0 border-t border-b border-t-[#8e98a8] border-b-[#8e98a8] bg-white" />
      <footer className="flex h-5 shrink-0 items-center pl-[5px] text-xs leading-5">
        <span>将视口设置为带边框体着色:</span>
        <span className="ml-3.5 font-['DejaVu_Sans_Mono',monospace] text-[10px]">SHADEMODE</span>
        <svg viewBox="0 0 10 10" className="ml-auto h-2.5 w-2.5 self-end" aria-hidden="true">
          <path d="M7 1h2v2H7zM7 4h2v2H7zM7 7h2v2H7zM4 4h2v2H4zM4 7h2v2H4zM1 7h2v2H1z" fill="#a8aba0" />
        </svg>
      </footer>

      <p className="absolute top-px right-[14px] font-['DejaVu_Serif',serif] text-base leading-6 text-[#f00808]">shaonx-2008-1-23</p>
      <p className="absolute top-[320px] left-[453px] text-[21px] leading-[25px] text-[#ffc60b]">
        点击看一下
        <br />
        这次的实体
      </p>

      <Menu label="视图" entries={viewMenu} className="-top-px left-[126px] w-[188px] border-t-0 px-[3px] pb-0.5" />
      <Menu label="着色" entries={shadeMenu} className="top-[149px] left-[308px] w-[146px] px-0.5 py-0.5" />
      <span className="pointer-events-none absolute top-[150px] left-[128px] h-[21px] w-[184px] rounded border-[3px] border-[#f80000]" />
      <span className="pointer-events-none absolute top-[259px] left-[313px] h-[21px] w-[138px] rounded border-[3px] border-[#f80000]" />
      <svg className="pointer-events-none absolute top-[280px] left-[399px] h-10 w-[68px]" viewBox="400 281 68 40" aria-hidden="true">
        <path d="M412 288L464 319" stroke="#f80000" strokeWidth="3" />
        <path d="M400 281L419 286L410 296Z" fill="#f80000" />
      </svg>
    </div>
  );
}
